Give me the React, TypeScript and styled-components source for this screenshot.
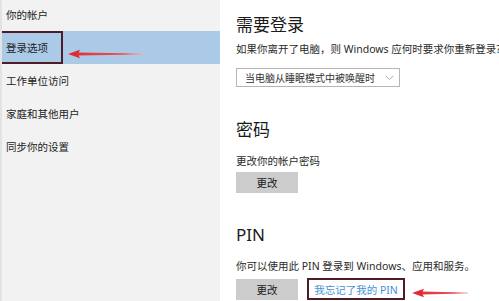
import React from "react";
import styled, { createGlobalStyle } from "styled-components";

const Global = createGlobalStyle`
  html, body { margin: 0; padding: 0; background: #ffffff; }
  body { font-family: "Noto Sans", "Noto Sans CJK SC", sans-serif; }
`;

const Frame = styled.div`
  position: relative;
  width: 499px;
  height: 301px;
  overflow: hidden;
  display: grid;
  grid-template-columns: 220px 1fr;
  font-family: "Noto Sans", "Noto Sans CJK SC", sans-serif;
`;

const Sidebar = styled.nav`
  background: #f2f2f2;
  border-left: 2px solid #e3e3e3;
  box-sizing: border-box;
  overflow: hidden;
`;

const NavList = styled.div`
  display: flex;
  flex-direction: column;
  margin-top: -2px;
`;

const NavItem = styled.div<{ $active?: boolean }>`
  position: relative;
  height: 33px;
  display: flex;
  align-items: center;
  font-size: 10.5px;
  color: #222;
  font-family: "Noto Sans CJK SC", sans-serif;
  background: ${(p) => (p.$active ? "#abcae8" : "transparent")};
  margin-left: ${(p) => (p.$active ? "-2px" : "0")};
  padding-left: ${(p) => (p.$active ? "6px" : "4px")};
`;

const MarkBox = styled.span<{ $w: number; $h: number }>`
  position: absolute;
  left: 0;
  top: 0;
  width: ${(p) => p.$w}px;
  height: ${(p) => p.$h}px;
  box-sizing: border-box;
  border: 2px solid #4e1c27;
  pointer-events: none;
`;

const Main = styled.main`
  background: #ffffff;
  padding: 14px 0 0 16px;
  display: flex;
  flex-direction: column;
  align-items: flex-start;
  overflow: hidden;
`;

const Heading = styled.h2<{ $mt?: number }>`
  margin: ${(p) => p.$mt ?? 0}px 0 0 0;
  font-size: 17px;
  line-height: 22px;
  font-weight: 400;
  color: #1a1a1a;
  font-family: "Noto Sans", "Noto Sans CJK SC", sans-serif;
`;

const Desc = styled.p<{ $mt: number }>`
  margin: ${(p) => p.$mt}px 0 0 0;
  font-size: 10.5px;
  line-height: 14px;
  color: #2a2a2a;
  white-space: nowrap;
  font-family: "Noto Sans", "Noto Sans CJK SC", sans-serif;
`;

const Select = styled.div`
  margin-top: 12px;
  width: 164px;
  height: 19px;
  box-sizing: border-box;
  border: 1px solid #b5b5b5;
  background: #fff;
  display: flex;
  align-items: center;
  justify-content: space-between;
  padding: 0 5px 0 8px;
  font-size: 10px;
  color: #333;
  white-space: nowrap;
  font-family: "Noto Sans CJK SC", sans-serif;
`;

const Button = styled.button<{ $mt?: number }>`
  margin-top: ${(p) => p.$mt ?? 0}px;
  width: 62px;
  height: 21px;
  border: none;
  background: #cccccc;
  font-size: 10.5px;
  color: #1a1a1a;
  padding: 0;
  font-family: "Noto Sans CJK SC", sans-serif;
`;

const ActionRow = styled.div`
  margin-top: 5px;
  display: flex;
  align-items: center;
  gap: 9px;
`;

const LinkBox = styled.a`
  position: relative;
  width: 98px;
  height: 22px;
  box-sizing: border-box;
  border: 2px solid #4e1c27;
  display: flex;
  align-items: center;
  justify-content: center;
  font-size: 10.5px;
  color: #4592d0;
  text-decoration: none;
  font-family: "Noto Sans", "Noto Sans CJK SC", sans-serif;
`;

const ArrowWrap = styled.div<{ $x: number; $y: number }>`
  position: absolute;
  left: ${(p) => p.$x}px;
  top: ${(p) => p.$y}px;
  pointer-events: none;
`;

const Arrow: React.FC<{ x: number; y: number; len: number; id: string }> = ({ x, y, len, id }) => (
  <ArrowWrap $x={x} $y={y - 5}>
    <svg width={len} height={10} viewBox={`0 0 ${len} 10`}>
      <defs>
        <linearGradient id={id} x1="0" y1="0" x2="1" y2="0">
          <stop offset="0" stopColor="#e2323a" />
          <stop offset="0.7" stopColor="#e8555a" />
          <stop offset="1" stopColor="#f2b5b7" />
        </linearGradient>
      </defs>
      <polygon points={`9,3.4 ${len},4.4 ${len},5.6 9,6.6`} fill={`url(#${id})`} />
      <polygon points="0,5 12,0.8 10,5 12,9.2" fill="#df2c34" />
    </svg>
  </ArrowWrap>
);

const Chevron = () => (
  <svg width="9" height="6" viewBox="0 0 9 6">
    <polyline points="0.8,1 4.5,4.6 8.2,1" fill="none" stroke="#a8a8a8" strokeWidth="1" />
  </svg>
);

const navItems = ["你的帐户", "登录选项", "工作单位访问", "家庭和其他用户", "同步你的设置"];

export default function App() {
  return (
    <Frame>
      <Global />
      <Sidebar>
        <NavList>
          {navItems.map((t, i) => (
            <NavItem key={t} $active={i === 1}>
              {t}
              {i === 1 && <MarkBox $w={63} $h={33} />}
            </NavItem>
          ))}
        </NavList>
      </Sidebar>
      <Main>
        <Heading>需要登录</Heading>
        <Desc $mt={6}>如果你离开了电脑，则 Windows 应何时要求你重新登录?</Desc>
        <Select>
          <span>当电脑从睡眠模式中被唤醒时</span>
          <Chevron />
        </Select>
        <Heading $mt={32}>密码</Heading>
        <Desc $mt={13}>更改你的帐户密码</Desc>
        <Button $mt={4}>更改</Button>
        <Heading $mt={31}>PIN</Heading>
        <Desc $mt={13}>你可以使用此 PIN 登录到 Windows、应用和服务。</Desc>
        <ActionRow>
          <Button>更改</Button>
          <LinkBox href="#">我忘记了我的 PIN</LinkBox>
        </ActionRow>
      </Main>
      <Arrow x={68} y={47} len={76} id="a1" />
      <Arrow x={412} y={286} len={56} id="a2" />
    </Frame>
  );
}
